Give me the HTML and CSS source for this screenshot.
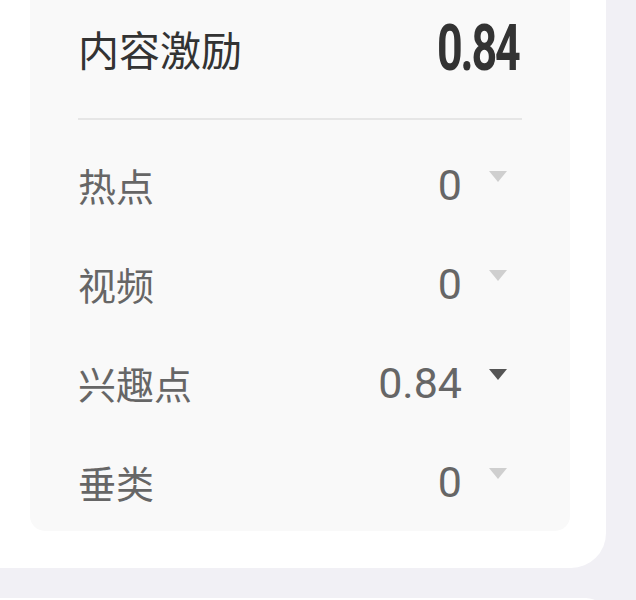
FILE: index.html
```html
<!DOCTYPE html>
<html lang="zh-CN">
	<head>
		<meta charset="UTF-8" />
		<title>内容激励</title>
		<link rel="stylesheet" href="styles.css">
	</head>
	<body>
		<div class="card">
			<div class="panel">
				<div class="head">
					<span class="head-title">内容激励</span>
					<span class="head-value">0.84</span>
				</div>
				<div class="divider"></div>
				<div class="row">
					<span class="label">热点</span>
					<span class="value">0<i class="arrow"></i></span>
				</div>
				<div class="row">
					<span class="label">视频</span>
					<span class="value">0<i class="arrow"></i></span>
				</div>
				<div class="row">
					<span class="label">兴趣点</span>
					<span class="value">0.84<i class="arrow active"></i></span>
				</div>
				<div class="row">
					<span class="label">垂类</span>
					<span class="value">0<i class="arrow"></i></span>
				</div>
			</div>
		</div>
		<div class="card next"></div>
	</body>
</html>
```

FILE: styles.css
```css
body {
	margin: 0;
	background: #f1f0f5;
	font-family: "Noto Sans CJK SC", "Noto Sans", sans-serif;
	overflow: hidden;
}
.card {
	background: #fff;
	margin: 0 30px 0 -6px;
	padding: 0 36px 37px 36px;
	border-radius: 0 0 35px 0;
}
.card.next {
	margin-top: 30px;
	height: 20px;
	padding: 0;
	border-radius: 0 35px 0 0;
}
.panel {
	background: #f9f9f9;
	padding: 0 48px;
	border-radius: 0 0 15px 15px;
}
.head {
	display: flex;
	justify-content: space-between;
	align-items: center;
	height: 96px;
}
.head-title {
	font-size: 41px;
	color: #333;
}
.head-value {
	display: inline-block;
	font-family: Roboto, sans-serif;
	font-weight: 700;
	font-size: 64px;
	letter-spacing: -3px;
	color: #333;
	transform: scaleX(0.7);
	transform-origin: right center;
	margin-right: 3px;
}
.divider {
	height: 2px;
	background: #e6e6e6;
	margin: 22px 0 15px;
}
.row {
	display: flex;
	justify-content: space-between;
	align-items: center;
	height: 99px;
}
.label {
	font-size: 38px;
	color: #666;
}
.value {
	display: flex;
	align-items: center;
	font-family: Roboto, sans-serif;
	font-size: 43px;
	color: #666;
}
.arrow {
	width: 0;
	height: 0;
	border-left: 9.5px solid transparent;
	border-right: 9.5px solid transparent;
	border-top: 11px solid #cfcfcf;
	margin: 0 15px 17px 27px;
}
.arrow.active {
	border-top-color: #555;
}
```
